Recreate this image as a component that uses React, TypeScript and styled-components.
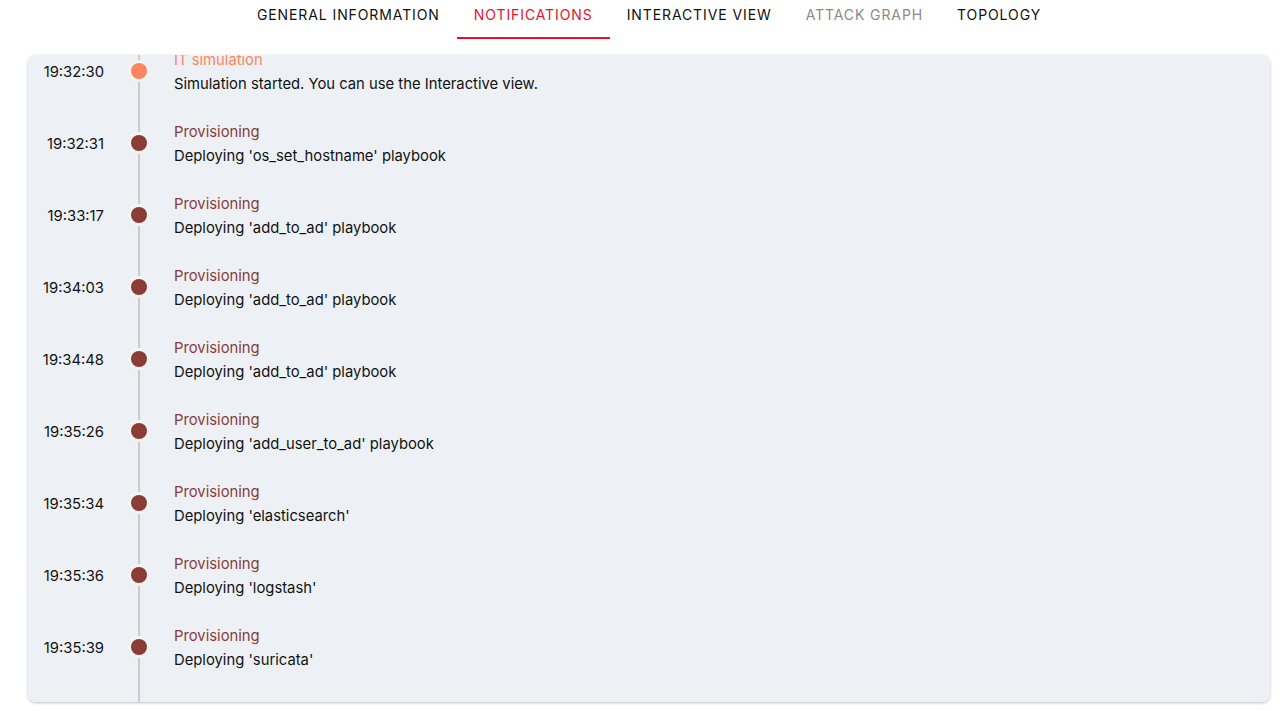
import React, { useLayoutEffect, useRef } from "react";
import styled, { createGlobalStyle } from "styled-components";

const Global = createGlobalStyle`
  html, body { margin: 0; padding: 0; background: #ffffff; }
  body { font-family: Inter, "Noto Sans", sans-serif; color: #111; }
`;

const Page = styled.div`
  display: flex;
  flex-direction: column;
  padding: 0 14px 0 28px;
  height: 711px;
  box-sizing: border-box;
`;

const Tabs = styled.nav`
  display: flex;
  justify-content: center;
  height: 39px;
  margin-bottom: 16px;
`;

const Tab = styled.div<{ $active?: boolean; $disabled?: boolean }>`
  display: flex;
  align-items: flex-start;
  padding: 6px 17px 0;
  font-size: 14px;
  font-weight: 400;
  letter-spacing: 0.9px;
  text-transform: uppercase;
  color: ${(p) => (p.$active ? "#e8112d" : p.$disabled ? "#8a8a8a" : "#111")};
  border-bottom: 2px solid ${(p) => (p.$active ? "#e8112d" : "transparent")};
  box-sizing: border-box;
  height: 39px;
`;

const Panel = styled.div`
  height: 647px;
  background: #edf1f5;
  border-radius: 8px;
  box-shadow: 0 1px 3px rgba(0, 0, 0, 0.25);
  overflow-y: auto;
  scrollbar-width: none;
  &::-webkit-scrollbar { display: none; }
`;

const List = styled.ul`
  position: relative;
  list-style: none;
  margin: 0;
  padding: 16px 0 19px;
  &::before {
    content: "";
    position: absolute;
    top: 0;
    bottom: 0;
    left: 110px;
    width: 2px;
    background: #cbcbcb;
  }
`;

const Item = styled.li`
  display: grid;
  grid-template-columns: 76px 16px 1fr;
  column-gap: 27px;
  align-items: center;
  height: 72px;
`;

const Time = styled.div`
  text-align: right;
  padding-top: 2px;
  font-size: 14.8px;
  color: #111;
`;

const Dot = styled.span<{ $color: string }>`
  position: relative;
  width: 16px;
  height: 16px;
  border-radius: 50%;
  background: ${(p) => p.$color};
  box-shadow: 0 0 0 3px #f3f3f3;
`;

const Content = styled.div`
  display: flex;
  flex-direction: column;
  padding-top: 2px;
  font-size: 14.8px;
  line-height: 24px;
`;

const Title = styled.div<{ $color: string }>`
  color: ${(p) => p.$color};
`;

const Body = styled.div`
  color: #111;
`;

type Ev = { time: string; title: string; body: string; accent: string };

const BROWN = "#8a3c35";
const SALMON = "#fd8660";

const events: Ev[] = [
  { time: "19:32:30", title: "IT simulation", body: "Simulation started. You can use the Interactive view.", accent: SALMON },
  { time: "19:32:31", title: "Provisioning", body: "Deploying 'os_set_hostname' playbook", accent: BROWN },
  { time: "19:33:17", title: "Provisioning", body: "Deploying 'add_to_ad' playbook", accent: BROWN },
  { time: "19:34:03", title: "Provisioning", body: "Deploying 'add_to_ad' playbook", accent: BROWN },
  { time: "19:34:48", title: "Provisioning", body: "Deploying 'add_to_ad' playbook", accent: BROWN },
  { time: "19:35:26", title: "Provisioning", body: "Deploying 'add_user_to_ad' playbook", accent: BROWN },
  { time: "19:35:34", title: "Provisioning", body: "Deploying 'elasticsearch'", accent: BROWN },
  { time: "19:35:36", title: "Provisioning", body: "Deploying 'logstash'", accent: BROWN },
  { time: "19:35:39", title: "Provisioning", body: "Deploying 'suricata'", accent: BROWN },
];

export default function App() {
  const ref = useRef<HTMLDivElement>(null);
  useLayoutEffect(() => {
    if (ref.current) ref.current.scrollTop = ref.current.scrollHeight;
  }, []);
  return (
    <>
      <Global />
      <Page>
        <Tabs>
          <Tab>General Information</Tab>
          <Tab $active>Notifications</Tab>
          <Tab>Interactive View</Tab>
          <Tab $disabled>Attack Graph</Tab>
          <Tab>Topology</Tab>
        </Tabs>
        <Panel ref={ref}>
          <List>
            {events.map((e, i) => (
              <Item key={i}>
                <Time>{e.time}</Time>
                <Dot $color={e.accent} />
                <Content>
                  <Title $color={e.accent}>{e.title}</Title>
                  <Body>{e.body}</Body>
                </Content>
              </Item>
            ))}
          </List>
        </Panel>
      </Page>
    </>
  );
}
